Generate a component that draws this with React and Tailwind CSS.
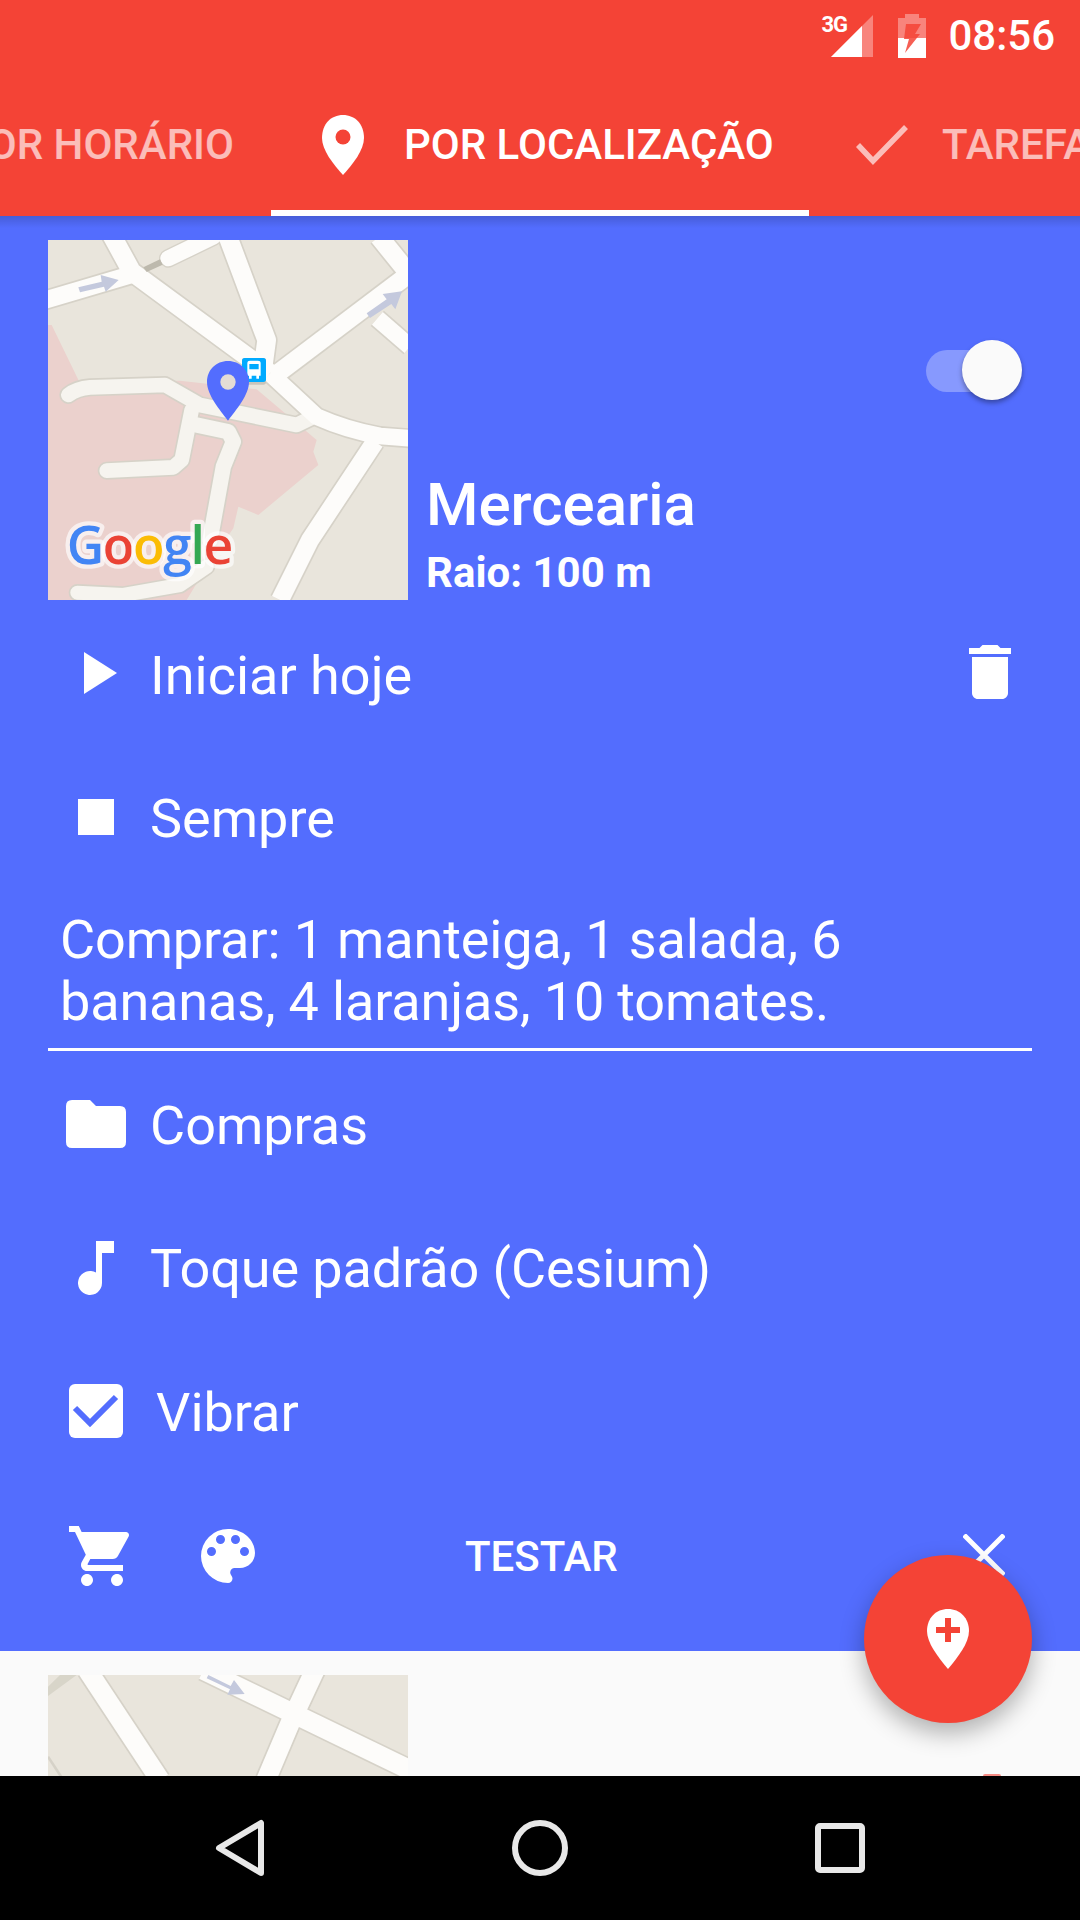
const font = { fontFamily: "Roboto, sans-serif" };

function MapOne() {
  const road = "#fdfcfa";
  const edge = "#d6d2c8";
  const roads = [
    { d: "M0 215 L270 135", w: 52 },
    { d: "M212 10 L275 125 L690 430", w: 56 },
    { d: "M560 10 L680 330 L668 420", w: 56 },
    { d: "M700 440 L1110 130", w: 54 },
    { d: "M1017 20 L1110 135", w: 56 },
    { d: "M1012 265 L1110 350", w: 50 },
    { d: "M385 85 L520 20", w: 48, edgeW: 56 },
    { d: "M1005 635 L810 930 L720 1110", w: 54 },
    { d: "M690 430 L830 560 Q920 600 1020 618 L1110 625", w: 50 },
  ];
  const inner = [
    { d: "M85 495 Q110 475 150 472 L375 465 L480 525 L770 585 L810 565", w: 44 },
    { d: "M455 540 L425 690 L400 712 L200 722", w: 44 },
    { d: "M470 585 L565 605 L580 635 L550 710 L510 930", w: 46 },
    { d: "M112 1088 L250 1095 L420 1065 L500 1010", w: 42 },
  ];
  return (
    <svg viewBox="24 30 1080 1080" className="w-[360px] h-[360px] shrink-0 block">
      <rect x="24" y="30" width="1080" height="1080" fill="#e9e5dc" />
      <path d="M24 285 L35 285 L120 460 L420 452 L650 478 L830 630 L820 665 L835 705 L655 855 L595 830 L580 895 L500 1010 L440 1110 L24 1110 Z" fill="#ebd1cd" />
      {roads.map((r) => (
        <path key={r.d} d={r.d} fill="none" stroke={edge} strokeWidth={r.edgeW || r.w + 10} strokeLinecap={r.edgeW ? "round" : "butt"} strokeLinejoin="round" />
      ))}
      {inner.map((r) => (
        <path key={r.d} d={r.d} fill="none" stroke={edge} strokeWidth={r.w + 10} strokeLinecap="round" strokeLinejoin="round" />
      ))}
      {inner.map((r) => (
        <path key={r.d} d={r.d} fill="none" stroke="#f6f4ef" strokeWidth={r.w} strokeLinecap="round" strokeLinejoin="round" />
      ))}
      {roads.map((r) => (
        <path key={r.d} d={r.d} fill="none" stroke={road} strokeWidth={r.w} strokeLinecap={r.edgeW ? "round" : "butt"} strokeLinejoin="round" />
      ))}
      <path d="M310 112 L360 88 L368 104 L320 126 Z" fill="#bdb9ad" />
      <path d="M115 172 L185 155 L182 135 L236 150 L197 185 L192 170 L120 187 Z" fill="#c4c9dd" />
      <path d="M980 250 L1040 208 L1028 192 L1086 184 L1066 238 L1054 222 L990 264 Z" fill="#c4c9dd" />
      <rect x="606" y="384" width="72" height="80" rx="8" fill="#c9c5ba" />
      <rect x="606" y="384" width="72" height="72" rx="8" fill="#00aaff" />
      <path d="M622 398 Q622 392 630 392 H654 Q662 392 662 398 V437 H657 V446 H649 V437 H635 V446 H627 V437 H622 Z M628 402 V418 H656 V402 Z" fill="#fff" />
      <path d="M564 393 C528 393 501 420 501 456 C501 495 540 540 564 572 C588 540 627 495 627 456 C627 420 600 393 564 393 Z" fill="#536dfe" />
      <circle cx="564" cy="456" r="23" fill="#e4dcd5" />
      <text x="80" y="1001" fontFamily="'Open Sans', Roboto, sans-serif" fontSize="155" fontWeight="600" letterSpacing="-4" stroke="#fff" strokeOpacity="0.65" strokeWidth="26" strokeLinejoin="round" paintOrder="stroke">
        <tspan fill="#4285f4">G</tspan>
        <tspan fill="#ea4335">o</tspan>
        <tspan fill="#fbbc05">o</tspan>
        <tspan fill="#4285f4">g</tspan>
        <tspan fill="#34a853">l</tspan>
        <tspan fill="#ea4335">e</tspan>
      </text>
    </svg>
  );
}

function MapTwo() {
  const roads = [
    "M142 90 L360 420",
    "M490 90 L1120 395",
    "M825 90 L750 250 L678 420",
  ];
  return (
    <svg viewBox="24 105 1080 378" className="w-[360px] h-[126px] shrink-0 block">
      <rect x="24" y="105" width="1080" height="378" fill="#e9e5dc" />
      <path d="M24 140 L60 105 L110 105 L24 168 Z" fill="#d8d5c9" />
      <path d="M24 350 L70 420" stroke="#d6d2c8" strokeWidth="8" fill="none" />
      {roads.map((d) => (
        <path key={d} d={d} fill="none" stroke="#d6d2c8" strokeWidth="68" />
      ))}
      {roads.map((d) => (
        <path key={d} d={d} fill="none" stroke="#fdfcfa" strokeWidth="58" />
      ))}
      <path d="M500 115 L505 105 L572 138 L582 120 L614 162 L562 164 L570 148 Z" fill="#c4c9dd" />
    </svg>
  );
}

function Row({ icon, children, textClass = "ml-[6px]" }) {
  return (
    <div className="flex items-center h-[143px] pl-[48px]">
      <div className="w-[96px] flex justify-center shrink-0">{icon}</div>
      <span className={`text-[54px] leading-none text-white ${textClass}`}>{children}</span>
    </div>
  );
}

export default function App() {
  return (
    <div className="relative w-[1080px] h-[1920px] overflow-hidden flex flex-col bg-[#fafafa]" style={font}>
      <header className="bg-[#f44336] h-[216px] shrink-0 flex flex-col relative z-10">
        <div className="h-[72px] flex items-center justify-end pr-[25px] text-white">
          <div className="relative w-[52px] h-[42px] mr-[25px]">
            <span className="absolute left-0 top-[-1px] text-[22px] font-bold leading-none tracking-tighter">3G</span>
            <svg viewBox="0 0 42 42" width="42" height="42" className="absolute right-0 top-0">
              <path d="M0 42 L42 0 V42 Z" fill="#fff" opacity="0.35" />
              <path d="M0 42 L31 11 V42 Z" fill="#fff" />
            </svg>
          </div>
          <svg viewBox="0 0 28 44" width="28" height="44" className="mr-[22px]">
            <path d="M0 4 H7 V0 H21 V4 H28 V44 H0 Z" fill="#fff" opacity="0.35" />
            <path d="M0 24 H28 V44 H0 Z" fill="#fff" />
            <path d="M8 10 H23 L17 20 H22 L7 39 L11 25 H6 Z" fill="#f44336" opacity="0.85" />
          </svg>
          <span className="text-[42px] font-medium leading-none">08:56</span>
        </div>
        <nav className="relative flex-1 flex overflow-hidden">
          <div className="absolute left-[-39px] top-[49px] text-[42px] font-medium leading-[48px] text-white/65 whitespace-nowrap">
            POR HORÁRIO
          </div>
          <div className="ml-[271px] w-[538px] shrink-0 h-[144px] border-b-[6px] border-white flex items-center pt-[8px]">
            <svg viewBox="0 0 42 60" width="42" height="60" className="ml-[51px] shrink-0">
              <path d="M21 0 C9 0 0 9 0 23 C0 35 11 49 21 60 C31 49 42 35 42 23 C42 9 33 0 21 0 Z" fill="#fff" />
              <circle cx="21" cy="22" r="7.500" fill="#f44336" />
            </svg>
            <span className="ml-[40px] text-[42px] font-medium leading-none text-white whitespace-nowrap">
              POR LOCALIZAÇÃO
            </span>
          </div>
          <div className="ml-[47px] flex items-center h-[138px] pt-[8px] text-white/65 whitespace-nowrap shrink-0">
            <svg viewBox="0 0 52 40" width="52" height="40" className="shrink-0 opacity-65" fill="none">
              <path d="M2 20 L17 36 L50 2" stroke="#fff" strokeWidth="5.500" />
            </svg>
            <span className="ml-[34px] text-[42px] font-medium leading-none">TAREFAS</span>
          </div>
        </nav>
      </header>

      <main className="bg-[#536dfe] h-[1435px] shrink-0 flex flex-col relative">
        <div className="absolute top-0 left-0 right-0 h-[12px] bg-gradient-to-b from-black/15 to-transparent" />
        <section className="flex pl-[48px] pr-[58px] pt-[24px]">
          <MapOne />
          <div className="flex-1 flex flex-col justify-between pl-[18px]">
            <div className="self-end relative w-[96px] h-[60px] mt-[100px]">
              <div className="absolute right-[24px] top-[10px] w-[72px] h-[42px] rounded-full bg-white/30" />
              <div className="absolute right-0 top-0 w-[60px] h-[60px] rounded-full bg-[#fafafa] shadow-[0_3px_5px_rgba(0,0,0,0.35)]" />
            </div>
            <div className="text-white">
              <div className="text-[60px] font-medium leading-[70px]">Mercearia</div>
              <div className="text-[42px] font-bold leading-[46px] mt-[10px] mb-[4px]">Raio: 100 m</div>
            </div>
          </div>
        </section>

        <div className="relative mt-[4px]">
          <Row
            icon={
              <svg viewBox="0 0 33 42" width="33" height="42" className="ml-[8px] mb-[6px]">
                <path d="M0 0 L33 21 L0 42 Z" fill="#fff" />
              </svg>
            }
          >
            Iniciar hoje
          </Row>
          <svg viewBox="0 0 24 24" width="72" height="72" fill="#fff" className="absolute right-[54px] top-[32px] block">
            <path d="M6 19c0 1.100.9 2 2 2h8c1.100 0 2-.9 2-2V7H6v12zM19 4h-3.500l-1-1h-5l-1 1H5v2h14V4z" />
          </svg>
          <Row icon={<div className="w-[36px] h-[36px] bg-white mb-[4px]" />}>Sempre</Row>
        </div>

        <div className="mx-[48px] mt-[19px] pb-[15px] border-b-[3px] border-white">
          <p className="pl-[12px] text-[54px] leading-[62px] tracking-[-0.15px] text-white w-[900px]">
            Comprar: 1 manteiga, 1 salada, 6 bananas, 4 laranjas, 10 tomates.
          </p>
        </div>

        <div className="mt-[3px]">
          <Row
            icon={
              <svg viewBox="0 0 60 48" width="60" height="48" className="mb-[4px]">
                <path d="M6 0 H24 L30 6 H54 Q60 6 60 12 V42 Q60 48 54 48 H6 Q0 48 0 42 V6 Q0 0 6 0 Z" fill="#fff" />
              </svg>
            }
          >
            Compras
          </Row>
          <Row
            icon={
              <svg viewBox="0 0 36 54" width="36" height="54" className="mb-[2px]">
                <path d="M18 0 H36 V12 H24 V42 A12 12 0 1 1 18 31.600 Z" fill="#fff" />
              </svg>
            }
            textClass="ml-[6px] mt-[1px] tracking-[-0.1px]"
          >
            Toque padrão (Cesium)
          </Row>
          <Row
            icon={
              <svg viewBox="0 0 54 54" width="54" height="54" className="mb-[1px]">
                <rect width="54" height="54" rx="6" fill="#fff" />
                <path d="M6 24 L21 39 L47 13" fill="none" stroke="#536dfe" strokeWidth="6" />
              </svg>
            }
            textClass="ml-[12px] mt-[2px]"
          >
            Vibrar
          </Row>
        </div>

        <div className="flex items-center h-[144px] relative mt-[2px]">
          <div className="ml-[69px] shrink-0 mb-[2px]">
            <svg viewBox="1 2 22 20" width="66" height="60" fill="#fff" className="block">
              <path d="M7 18c-1.100 0-1.990.9-1.990 2S5.900 22 7 22s2-.9 2-2-.9-2-2-2zM1 2v2h2l3.600 7.590-1.350 2.450c-.16.28-.25.61-.25.96 0 1.100.9 2 2 2h12v-2H7.420c-.14 0-.25-.11-.25-.25l.03-.12.9-1.630h7.450c.75 0 1.410-.41 1.750-1.030l3.580-6.490c.08-.14.120-.31.120-.48 0-.55-.45-1-1-1H5.210l-.94-2H1zm16 16c-1.100 0-1.990.9-1.990 2s.89 2 1.990 2 2-.9 2-2-.9-2-2-2z" />
            </svg>
          </div>
          <div className="ml-[66px] shrink-0 mb-[2px]">
            <svg viewBox="3 3 18 18" width="54" height="54" fill="#fff" className="block">
              <path d="M12 3a9 9 0 0 0 0 18c.83 0 1.500-.67 1.500-1.500 0-.39-.15-.74-.39-1.010-.23-.26-.38-.61-.38-.99 0-.83.67-1.500 1.500-1.500H16c2.760 0 5-2.240 5-5 0-4.420-4.030-8-9-8zm-5.500 9a1.500 1.500 0 1 1 0-3 1.500 1.500 0 0 1 0 3zm3-4a1.500 1.500 0 1 1 0-3 1.500 1.500 0 0 1 0 3zm5 0a1.500 1.500 0 1 1 0-3 1.500 1.500 0 0 1 0 3zm3 4a1.500 1.500 0 1 1 0-3 1.500 1.500 0 0 1 0 3z" />
            </svg>
          </div>
          <span className="ml-[210px] text-[42px] font-medium leading-none text-white">TESTAR</span>
          <svg viewBox="0 0 42 42" width="42" height="42" className="absolute left-[963px] top-[49px]">
            <path d="M1 1 L41 41 M41 1 L1 41" stroke="#fff" strokeWidth="5" />
          </svg>
        </div>
      </main>

      <section className="relative flex-1 bg-[#fafafa] pt-[24px] pl-[48px] min-h-0 overflow-hidden">
        <MapTwo />
        <div className="absolute left-[983px] bottom-0 w-[18px] h-[2px] rounded-t-full bg-[#f44336]/60" />
      </section>

      <footer className="bg-black h-[144px] shrink-0 relative z-10">
        <svg viewBox="0 0 1080 144" width="1080" height="144" fill="none" stroke="#e8e8e8" strokeWidth="6" strokeLinejoin="round" className="block">
          <path d="M261 47 V97 L219 72 Z" />
          <circle cx="540" cy="72" r="25" />
          <rect x="818" y="50" width="44" height="44" rx="2" />
        </svg>
      </footer>

      <button className="absolute left-[864px] top-[1555px] w-[168px] h-[168px] rounded-full bg-[#f44336] shadow-[0_10px_24px_rgba(0,0,0,0.3)] flex items-center justify-center z-20">
        <svg viewBox="0 0 42 60" width="42" height="60" className="block">
          <path d="M21 0 C9 0 0 9 0 22 C0 34 11 48 21 60 C31 48 42 34 42 22 C42 9 33 0 21 0 Z" fill="#fff" />
          <path d="M18 9 H24 V18 H33 V24 H24 V33 H18 V24 H9 V18 H18 Z" fill="#f44336" />
        </svg>
      </button>
    </div>
  );
}
